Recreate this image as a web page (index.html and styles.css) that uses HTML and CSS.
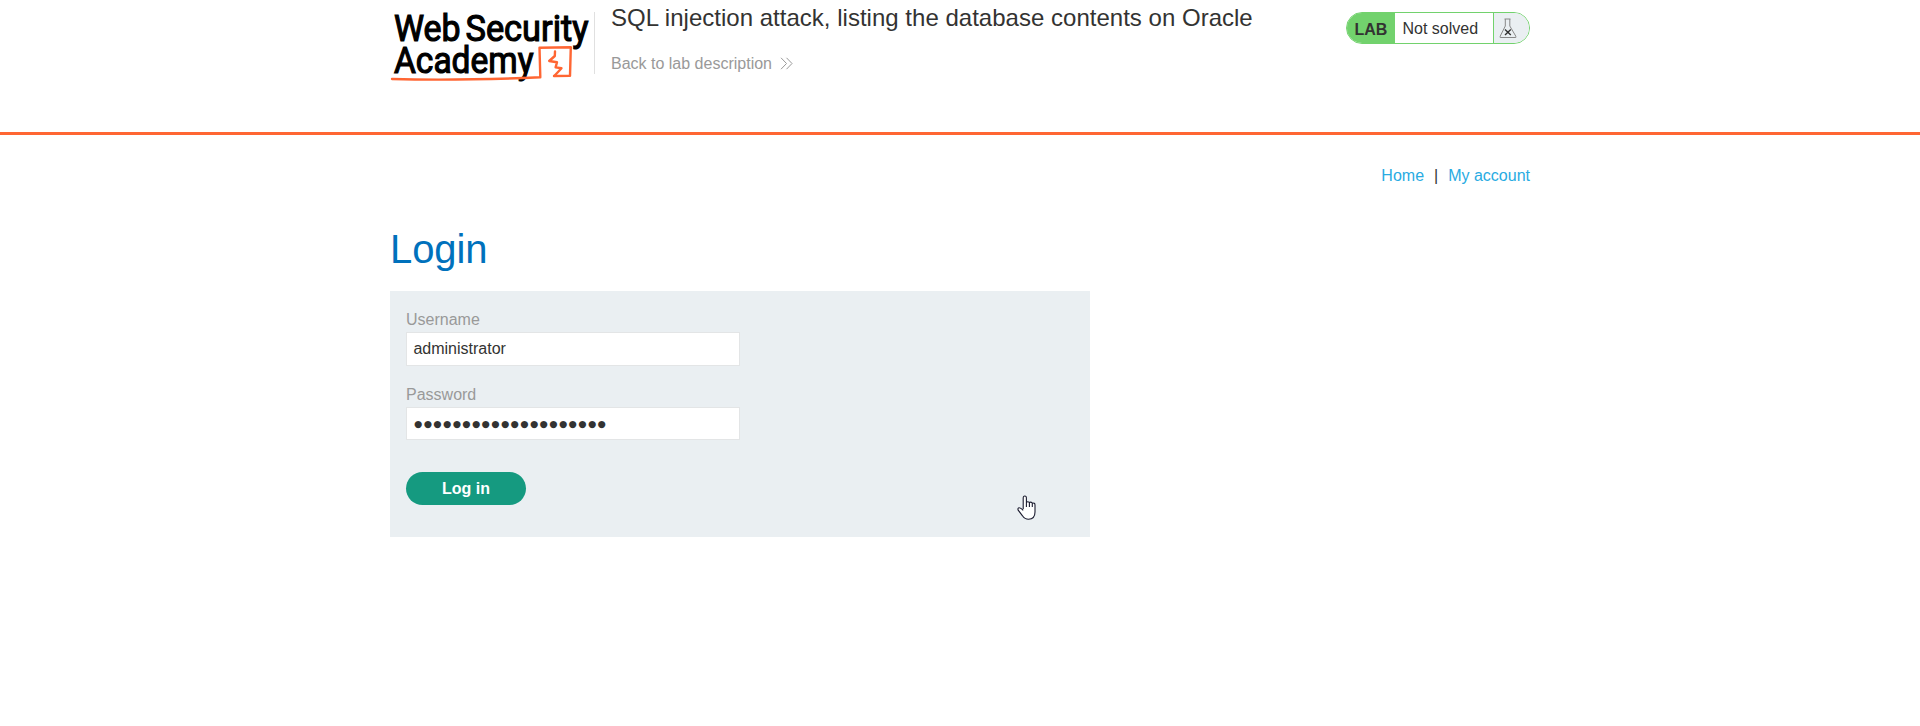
FILE: index.html
```html
<!DOCTYPE html>
<html lang="en">
<head>
<meta charset="utf-8">
<title>SQL injection attack, listing the database contents on Oracle</title>
<link rel="stylesheet" href="styles.css">
</head>
<body>
<header class="lab-header">
  <div class="container header-row">
    <svg class="logo" width="204" height="95" viewBox="0 0 204 95" role="img" aria-label="Web Security Academy">
      <g class="logo-text">
        <text x="4" y="40.5" textLength="66.5" lengthAdjust="spacingAndGlyphs">Web</text>
        <text x="75.5" y="40.5" textLength="123" lengthAdjust="spacingAndGlyphs">Security</text>
        <text x="4" y="73" textLength="139.5" lengthAdjust="spacingAndGlyphs">Academy</text>
      </g>
      <g class="logo-mark">
        <path d="M134 78 L150.3 77.3 L149.5 47.8 L180.8 47.2 L180 75.9 L164 76"/>
        <path d="M2 79 Q60 80.6 134 78"/>
        <path d="M165 51.5 L164.8 56 L159.2 61 L167 62.3 L165.6 67.4 L171.5 68.2 L164.5 75.8"/>
      </g>
    </svg>
    <div class="title-block">
      <h2>SQL injection attack, listing the database contents on Oracle</h2>
      <a class="back" href="#">Back to lab description
        <svg width="13" height="13" viewBox="0 0 13 13"><path d="M1 .8 6.5 6.5 1 12.2M6.5 .8 12 6.5 6.5 12.2"/></svg>
      </a>
    </div>
    <div class="status">
      <span class="status-tag">LAB</span>
      <span class="status-text">Not solved</span>
      <span class="status-icon">
        <svg width="18" height="21" viewBox="0 0 18 21"><path class="flask" d="M5.5 1h6M6.3 1v7L1.2 18.2v1.3h15.6v-1.3L10.8 8V1"/><path class="cross" d="M6 11.5 11.8 17M11.8 11.5 6 17"/></svg>
      </span>
    </div>
  </div>
</header>
<main class="container">
  <nav class="top-links"><a href="#">Home</a><span>|</span><a href="#">My account</a></nav>
  <h1>Login</h1>
  <form class="login-form">
    <label>Username</label>
    <div class="field">administrator</div>
    <label>Password</label>
    <div class="field field-password"><span class="dots">●●●●●●●●●●●●●●●●●●●●</span></div>
    <button type="button">Log in</button>
  </form>
</main>
<svg class="pointer" width="20" height="26" viewBox="0 0 20 26"><path d="M6.2 14V3.2Q6.2 1 7.8 1T9.4 3.2V7.5Q10.5 6 12.4 7.4Q14 6.6 15.2 8Q18 7.6 18 10V17Q18 24 11.5 24.3Q7.8 24.3 5.5 20.8L1.2 15.2Q.4 13.2 2 12.8Q3.6 12.6 6.2 15.3M9.4 7V12M12.4 7.5V12M15.3 8V12"/></svg>
</body>
</html>
```
FILE: styles.css
```css
* { box-sizing: border-box; }
body {
  margin: 0;
  background: #fff;
  color: #333332;
  font: 16px/24px "Liberation Sans", Arial, sans-serif;
}
a { text-decoration: none; }
.container { width: 1140px; margin: 0 auto; }
.lab-header { height: 135px; border-bottom: 3px solid #ff6633; }
.header-row { display: flex; align-items: flex-start; }
.logo { display: block; flex: none; }
.logo-text {
  font: 400 37.5px Roboto, sans-serif;
  fill: #000;
  stroke: #000;
  stroke-width: 1.2;
}
.logo-mark {
  fill: none;
  stroke: #ff6633;
  stroke-width: 2.4;
  stroke-linejoin: round;
  stroke-linecap: round;
}
.title-block { display: flex; flex-direction: column; position: relative; padding-left: 17px; }
.title-block::before {
  content: "";
  position: absolute;
  left: 0;
  top: 12px;
  width: 1px;
  height: 62px;
  background: #e0e0e0;
}
h2 { margin: 4px 0 0; font-size: 24px; line-height: 28px; font-weight: 400; letter-spacing: .015px; white-space: nowrap; }
.back { display: flex; align-items: center; gap: 8px; margin-top: 20px; color: #999; }
.back svg { fill: none; stroke: #999; stroke-width: 1; margin-bottom: 2px; }
.status {
  display: flex;
  width: 184px;
  height: 32px;
  margin: 12px 0 0 auto;
  border: 1px solid #72d26d;
  border-radius: 16px;
  overflow: hidden;
  line-height: 32px;
}
.status-tag { width: 48px; padding-left: 7.5px; background: #72d26d; font-weight: 700; line-height: 33px; }
.status-text { width: 98px; padding-left: 7.5px; line-height: 31px; }
.status-icon { flex: 1; padding: 5px 0 0 5px; border-left: 1px solid #72d26d; background: #eaeff2; }
.status-icon svg { display: block; fill: none; }
.flask { stroke: #888; stroke-width: 1; }
.cross { stroke: #333; stroke-width: 1.4; }
.top-links { display: flex; justify-content: flex-end; gap: 10px; padding-top: 29px; }
.top-links a { color: #29abe2; }
h1 { margin: 37px 0 0; font-size: 40px; line-height: 48px; font-weight: 400; letter-spacing: -.1px; color: #0071bc; }
.login-form {
  display: flex;
  flex-direction: column;
  align-items: flex-start;
  width: 700px;
  height: 246px;
  margin-top: 18px;
  padding: 16px;
  background: #eaeff2;
}
label { color: #999; height: 25px; line-height: 26px; }
.field {
  width: 334px;
  height: 34px;
  margin-bottom: 16px;
  padding: 0 6.4px;
  border: 1px solid #e3e5e6;
  background: #fff;
  line-height: 32px;
}
.field-password { height: 33px; margin-bottom: 32px; padding-left: 7px; }
.dots { display: block; font: 9.4px/32px "DejaVu Sans", sans-serif; letter-spacing: 1.48px; }
button {
  width: 120px;
  height: 33px;
  padding: 0;
  border: 0;
  border-radius: 17px;
  background: #159a80;
  color: #fff;
  font: 700 16px "Liberation Sans", Arial, sans-serif;
}
.pointer { position: absolute; left: 1016.5px; top: 495px; fill: #fff; stroke: #1b1b2f; stroke-width: 1.1; }
```
